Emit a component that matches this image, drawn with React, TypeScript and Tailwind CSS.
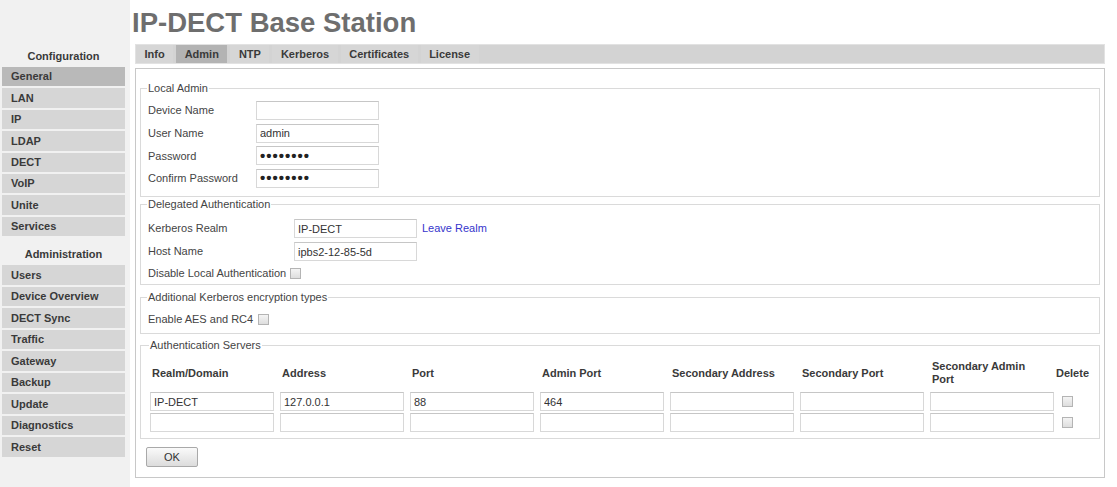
import React from 'react';

const configItems = ['General', 'LAN', 'IP', 'LDAP', 'DECT', 'VoIP', 'Unite', 'Services'];
const adminItems = ['Users', 'Device Overview', 'DECT Sync', 'Traffic', 'Gateway', 'Backup', 'Update', 'Diagnostics', 'Reset'];
const tabs = ['Info', 'Admin', 'NTP', 'Kerberos', 'Certificates', 'License'];
const serverCols = ['Realm/Domain', 'Address', 'Port', 'Admin Port', 'Secondary Address', 'Secondary Port', 'Secondary Admin Port'];
const serverRows = [
  ['IP-DECT', '127.0.0.1', '88', '464', '', '', ''],
  ['', '', '', '', '', '', ''],
];

const inputCls = 'h-[19px] border border-[#d8d8d8] border-t-[#c6c6c6] bg-white px-[3px] text-[11px] text-[#333] outline-none';
const pwCls = 'h-[19px] border border-[#d8d8d8] border-t-[#c6c6c6] bg-white px-[3px] text-[15px] tracking-[1px] font-bold text-[#222] outline-none';

const Box = ({ className = '' }: { className?: string }) => (
  <span className={`inline-block w-[11px] h-[11px] border border-[#b4b4b4] bg-gradient-to-b from-[#f4f4f4] to-[#dedede] ${className}`} />
);

const Fieldset = ({ title, className = '', children }: { title: string; className?: string; children: React.ReactNode }) => (
  <fieldset className={`border border-[#dadada] px-[7px] ${className}`}>
    <legend className="ml-[-1px] px-[1px] text-[11px] leading-[14px] text-[#444]">{title}</legend>
    {children}
  </fieldset>
);

export default function App() {
  return (
    <div className="flex w-[1117px] h-[487px] bg-white text-[#333]" style={{ fontFamily: '"Liberation Sans", Arial, sans-serif' }}>
      <div className="w-[130px] shrink-0 bg-[#f1f1f1] pt-[46px] pl-[2px]">
        <div className="w-[123px] h-[20px] flex items-center justify-center text-[11px] font-bold text-[#3a3a3a]">Configuration</div>
        <div className="flex flex-col gap-[2px] mt-[1px]">
          {configItems.map(item => (
            <div key={item} className={`w-[123px] h-[19.4px] flex items-center pl-[9px] text-[11px] font-bold text-[#3a3a3a] ${item === 'General' ? 'bg-[#b9b9b9]' : 'bg-[#d6d6d6]'}`}>
              {item}
            </div>
          ))}
        </div>
        <div className="w-[123px] h-[28px] flex items-center justify-center text-[11px] font-bold text-[#3a3a3a] pt-[8px]">Administration</div>
        <div className="flex flex-col gap-[2px] mt-[1px]">
          {adminItems.map(item => (
            <div key={item} className="w-[123px] h-[19.5px] flex items-center pl-[9px] text-[11px] font-bold text-[#3a3a3a] bg-[#d6d6d6]">
              {item}
            </div>
          ))}
        </div>
      </div>

      <div className="flex flex-col pl-[2px]">
        <div className="h-[44px] pt-[7px]">
          <h1 className="text-[27.5px] leading-[32px] font-bold text-[#6e6e6e]">IP-DECT Base Station</h1>
        </div>

        <div className="ml-[3px] w-[970px] h-[20px] flex bg-[#d3d3d3] border border-[#e2e2e2]">
          {tabs.map(t => (
            <div key={t} className={`h-full flex items-center px-[8.5px] mr-[3px] text-[11px] font-bold text-[#3a3a3a] ${t === 'Admin' ? 'bg-[#b3b3b3]' : 'bg-[#d6d6d6]'}`}>
              {t}
            </div>
          ))}
        </div>

        <div className="ml-[3px] mt-[4px] w-[970px] h-[410px] border border-[#c8c8c8] px-[4px] pt-[12px]">
          <Fieldset title="Local Admin" className="pb-[8px]">
            <div className="flex flex-col gap-[3.7px] mt-[6px]">
              {[
                ['Device Name', '', 'text'],
                ['User Name', 'admin', 'text'],
                ['Password', 'password', 'password'],
                ['Confirm Password', 'password', 'password'],
              ].map(([label, value, type]) => (
                <div key={label} className="flex items-center">
                  <span className="w-[108px] text-[11px] text-[#444]">{label}</span>
                  <input readOnly type={type} defaultValue={value} className={`${type === 'password' ? pwCls : inputCls} w-[123px]`} />
                </div>
              ))}
            </div>
          </Fieldset>

          <Fieldset title="Delegated Authentication" className="pb-[2px]">
            <div className="flex flex-col gap-[4px] mt-[8px]">
              <div className="flex items-center">
                <span className="w-[146px] text-[11px] text-[#444]">Kerberos Realm</span>
                <input readOnly defaultValue="IP-DECT" className={`${inputCls} w-[123px]`} />
                <a className="ml-[5px] text-[11px] text-[#3535cc]">Leave Realm</a>
              </div>
              <div className="flex items-center">
                <span className="w-[146px] text-[11px] text-[#444]">Host Name</span>
                <input readOnly defaultValue="ipbs2-12-85-5d" className={`${inputCls} w-[123px]`} />
              </div>
              <div className="flex items-center h-[17px]">
                <span className="text-[11px] text-[#444]">Disable Local Authentication</span>
                <Box className="ml-[4px]" />
              </div>
            </div>
          </Fieldset>

          <Fieldset title="Additional Kerberos encryption types" className="mt-[5px] pb-[4px]">
            <div className="flex items-center h-[19px] mt-[6px]">
              <span className="text-[11px] text-[#444]">Enable AES and RC4</span>
              <Box className="ml-[5px]" />
            </div>
          </Fieldset>

          <Fieldset title="Authentication Servers" className="mt-[4px] pb-[6px] pl-[9px]">
            <div className="grid grid-cols-[124px_124px_124px_124px_124px_124px_124px_auto] gap-x-[6px] gap-y-[2px] items-center mt-[4px]">
              {serverCols.map(c => (
                <div key={c} className="h-[34px] flex items-center text-[11px] font-bold text-[#3a3a3a] leading-[13px] pl-[2px]">
                  <span className={c === 'Secondary Admin Port' ? 'w-[100px]' : ''}>{c}</span>
                </div>
              ))}
              <div className="h-[34px] flex items-center text-[11px] font-bold text-[#3a3a3a] -ml-[4px]">Delete</div>
              {serverRows.map((row, i) => (
                <React.Fragment key={i}>
                  {row.map((v, j) => (
                    <input key={j} readOnly defaultValue={v} className={`${inputCls} w-[124px]`} />
                  ))}
                  <Box className={`ml-[2px] ${i === 0 ? 'border-[#9e9e9e]' : ''}`} />
                </React.Fragment>
              ))}
            </div>
          </Fieldset>

          <button className="mt-[8px] ml-[6px] w-[52px] h-[20px] rounded-[2px] border border-[#a9a9a9] bg-gradient-to-b from-[#fafafa] to-[#dcdcdc] text-[11px] text-[#333]">
            OK
          </button>
        </div>
      </div>
    </div>
  );
}
